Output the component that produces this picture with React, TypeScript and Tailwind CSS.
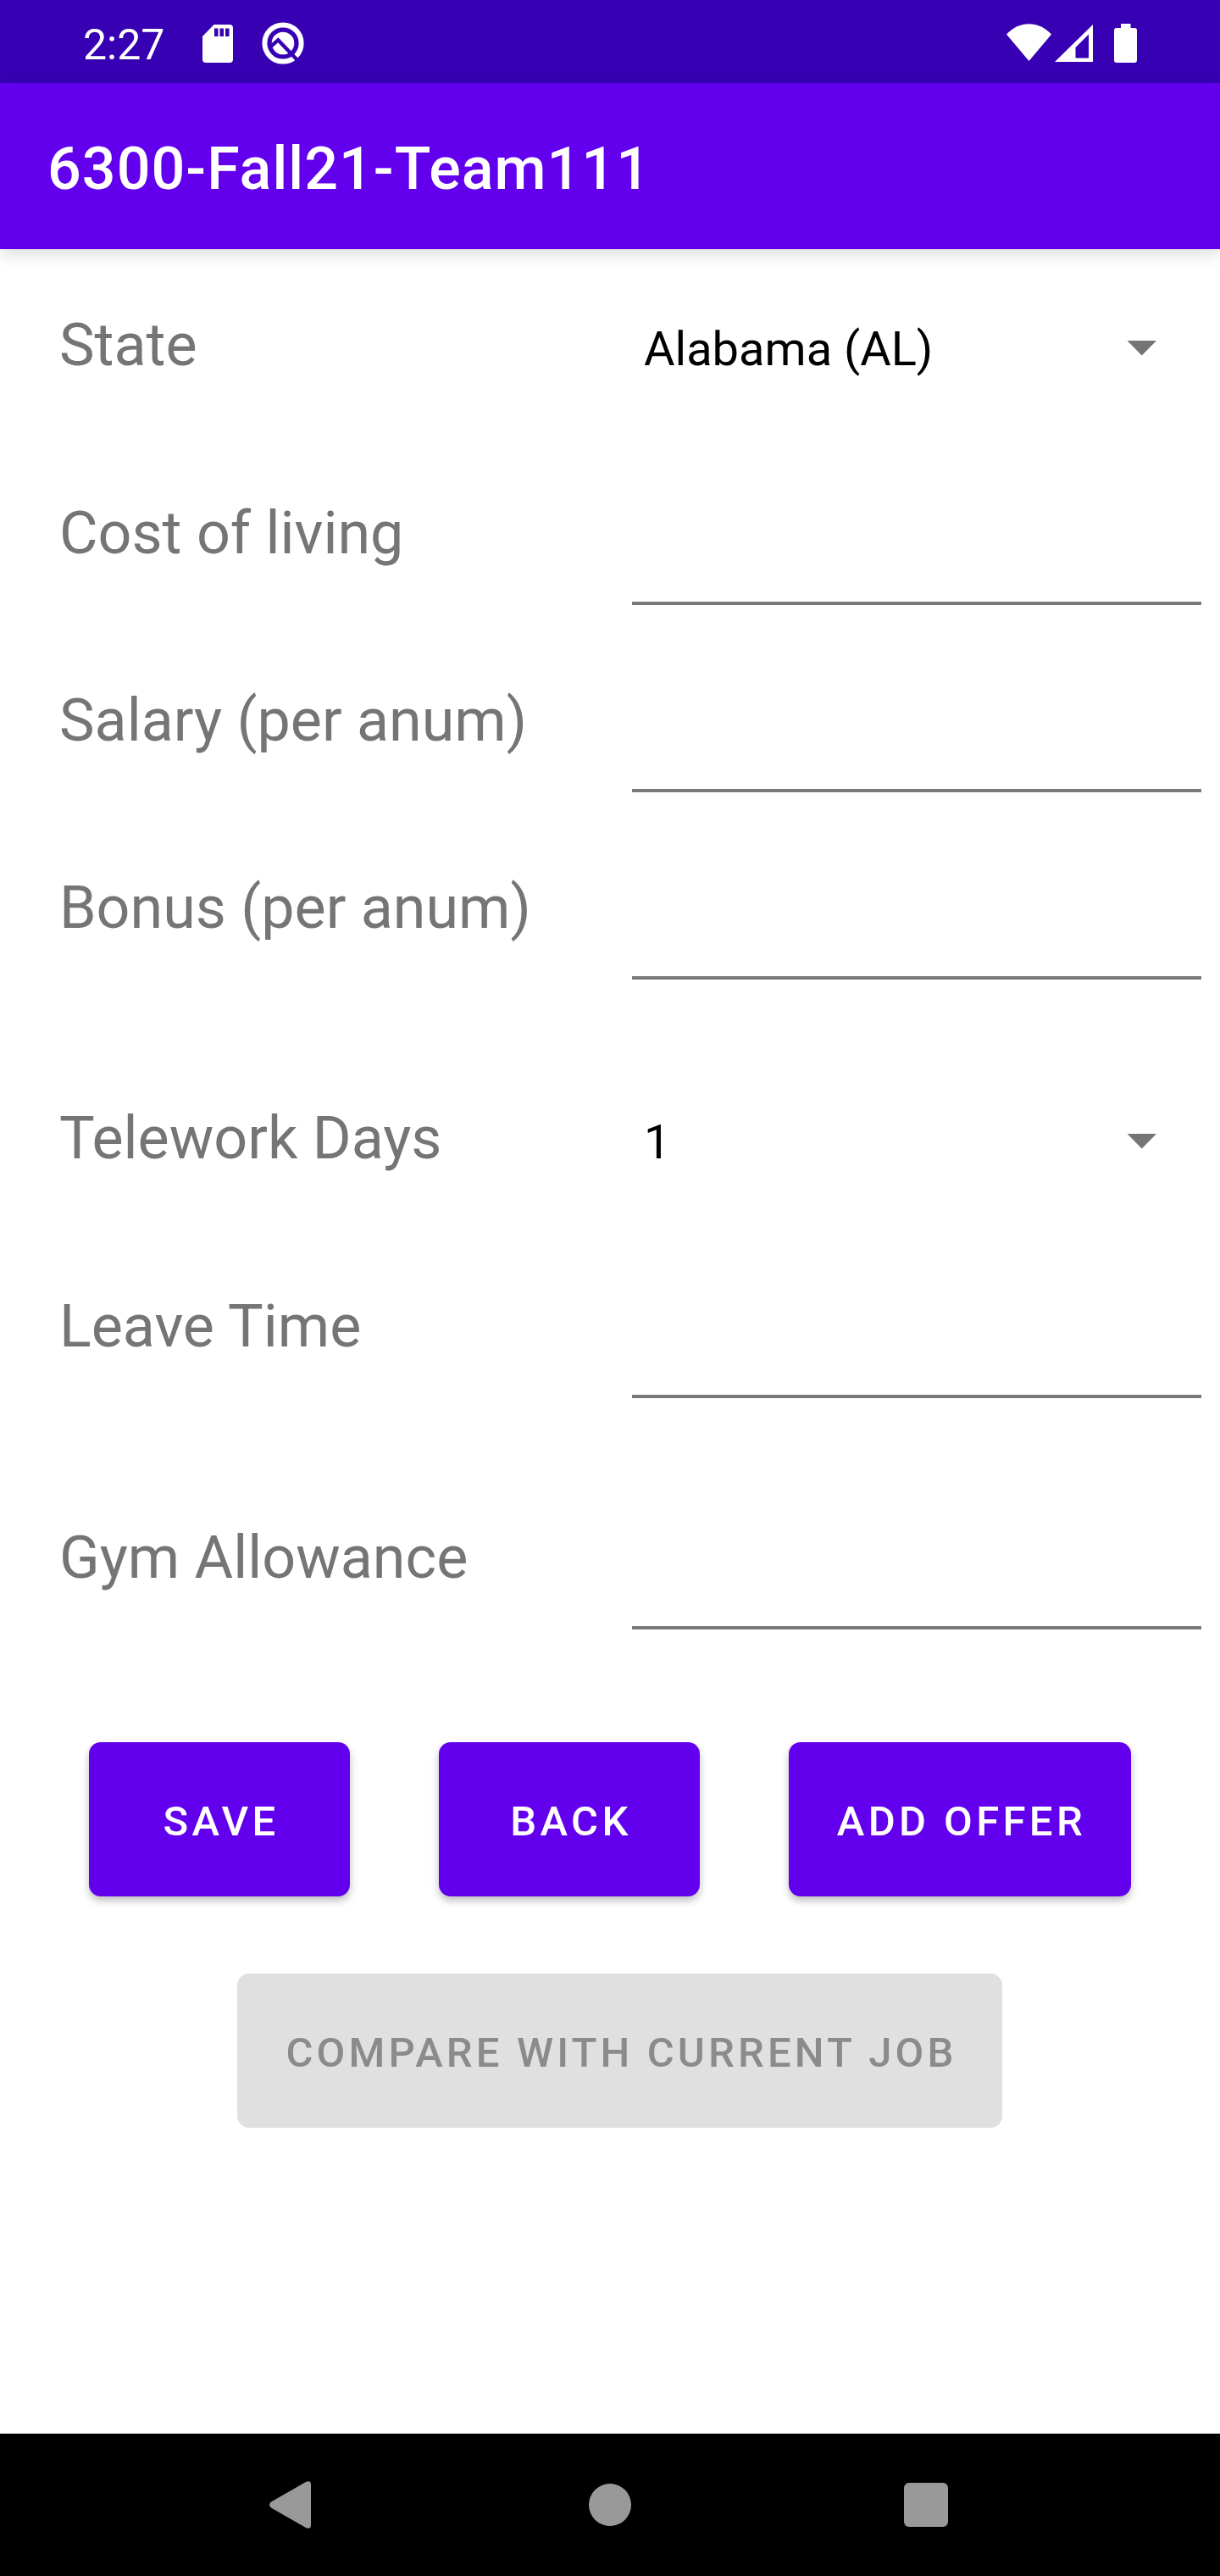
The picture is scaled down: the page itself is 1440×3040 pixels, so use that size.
import React from "react";

function Label({ children }: { children: string }) {
  return <div className="h-[82px] w-[746px] shrink-0 pl-[70px] text-[70px] leading-[82px] whitespace-nowrap text-[#757575]">{children}</div>;
}

function FieldRow({ label, className }: { label: string; className: string }) {
  return (
    <div className={`flex h-[126px] ${className}`}>
      <Label>{label}</Label>
      <div className="h-[126px] w-[672px] border-b-4 border-[#797979]" />
    </div>
  );
}

function SpinnerRow({ label, value, className }: { label: string; value: string; className: string }) {
  return (
    <div className={`flex h-[82px] ${className}`}>
      <Label>{label}</Label>
      <div className="flex h-[82px] w-[672px] items-center justify-between pt-[9px] pr-[53px] pl-[14px]">
        <span className="text-[56px] leading-[66px] text-black">{value}</span>
        <svg width="35" height="18" viewBox="0 0 35 18" fill="#757575" className="-mt-px">
          <path d="M0.500 0h34.500L17.700 17.500z" />
        </svg>
      </div>
    </div>
  );
}

function Button({ label, className }: { label: string; className: string }) {
  return (
    <button
      className={`h-[182px] rounded-[14px] pt-[5px] pl-[4px] text-center text-[49px] leading-[58px] font-medium whitespace-nowrap ${className}`}
    >
      {label}
    </button>
  );
}

const primary = "bg-[#6200ee] text-white tracking-[4.375px] shadow-[0_5px_10px_rgba(0,0,0,0.26)]";

export default function App() {
  return (
    <div className="flex h-[3040px] w-[1440px] flex-col overflow-hidden bg-white font-[Roboto,sans-serif]">
      <div className="flex h-[98px] shrink-0 items-start justify-between bg-[#3700b3] text-white">
        <div className="flex items-start pl-[98px]">
          <span className="mt-[24px] w-[141px] text-[50px] leading-[59px]">2:27</span>
          <svg width="36" height="45" viewBox="0 0 36 45" className="mt-[29px]" fill="currentColor">
            <path fillRule="evenodd" d="M13.500 0H32a4 4 0 0 1 4 4v37a4 4 0 0 1-4 4H4a4 4 0 0 1-4-4V14zM14 4.500v9.500h4.500V4.500zM20.500 4.500v9.500H25V4.500zM27 4.500v9.500h4.500V4.500z" />
          </svg>
          <svg width="50" height="50" viewBox="0 0 50 50" className="mt-[26px] ml-[34px]">
            <circle cx="25" cy="25" r="21.600" fill="none" stroke="white" strokeWidth="6" />
            <circle cx="25" cy="25" r="13.300" fill="white" />
            <path d="M10.500 29L19.300 21.200L43 46" fill="none" stroke="#3700b3" strokeWidth="4.400" />
          </svg>
        </div>
        <div className="flex items-start pr-[98px]">
          <svg width="53" height="44" viewBox="0 0 53 44" className="mt-[28px]" fill="currentColor">
            <path d="M0 12.500C15-4 38-4 53 12.500L26.500 44z" />
          </svg>
          <svg width="45" height="44" viewBox="0 0 45 44" className="mt-[29px] ml-[4px]" fill="currentColor">
            <path fillRule="evenodd" d="M45 0V44H0zM40 11.500L24.500 27V39.500H40z" />
          </svg>
          <svg width="27" height="46" viewBox="0 0 27 46" className="mt-[28px] ml-[25px]" fill="currentColor">
            <path d="M8 0H19.500V5H24a3 3 0 0 1 3 3V43a3 3 0 0 1-3 3H3a3 3 0 0 1-3-3V8a3 3 0 0 1 3-3H8z" />
          </svg>
        </div>
      </div>

      <header className="flex h-[196px] shrink-0 items-center bg-[#6200ee] pt-[6px] pl-[56px] shadow-[0_6px_18px_rgba(0,0,0,0.14)]">
        <h1 className="text-[70px] leading-[82px] font-medium tracking-[1.05px] text-white">6300-Fall21-Team111</h1>
      </header>

      <main className="flex flex-1 flex-col">
        <SpinnerRow label="State" value="Alabama (AL)" className="mt-[72px]" />
        <FieldRow label="Cost of living" className="mt-[140px]" />
        <FieldRow label="Salary (per anum)" className="mt-[95px]" />
        <FieldRow label="Bonus (per anum)" className="mt-[95px]" />
        <SpinnerRow label="Telework Days" value="1" className="mt-[146px]" />
        <FieldRow label="Leave Time" className="mt-[140px]" />
        <FieldRow label="Gym Allowance" className="mt-[147px]" />
        <div className="mt-[133px] flex pl-[105px]">
          <Button label="SAVE" className={`w-[308px] ${primary}`} />
          <Button label="BACK" className={`ml-[105px] w-[308px] ${primary}`} />
          <Button label="ADD OFFER" className={`ml-[105px] w-[404px] ${primary}`} />
        </div>
        <Button
          label="COMPARE WITH CURRENT JOB"
          className="mt-[91px] ml-[280px] w-[903px] bg-[#e0e0e0] tracking-[4.14px] text-[#8b8b8b]"
        />
      </main>

      <nav className="flex h-[168px] shrink-0 items-center bg-black pl-[318px]">
        <svg width="49" height="56" viewBox="0 0 49 56" fill="#999">
          <path d="M2 24.500L43 1Q49-1.500 49 4V52Q49 57.500 43 55L2 31.500Q-2 28 2 24.500z" />
        </svg>
        <div className="ml-[328px] size-[50px] rounded-full bg-[#999]" />
        <div className="ml-[322px] size-[52px] rounded-[6px] bg-[#999]" />
      </nav>
    </div>
  );
}
